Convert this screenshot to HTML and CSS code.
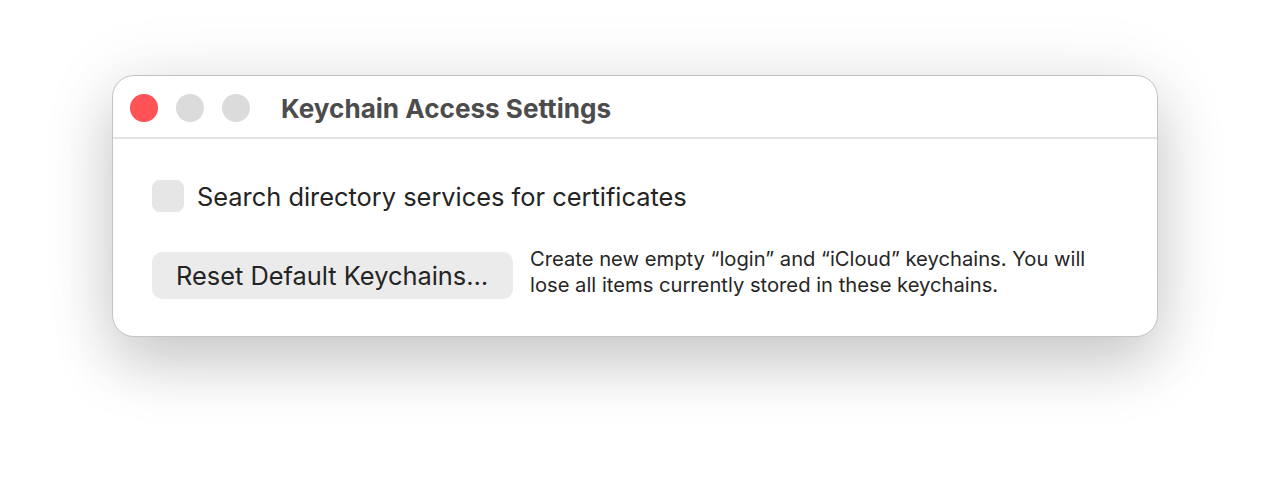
FILE: index.html
```html
<!DOCTYPE html>
<html lang="en">
<head>
<meta charset="utf-8">
<title>Keychain Access Settings</title>
<link rel="stylesheet" href="styles.css">
</head>
<body>
<div class="stage">
  <div class="window">
    <div class="titlebar">
      <div class="lights">
        <span class="light close"></span>
        <span class="light"></span>
        <span class="light"></span>
      </div>
      <div class="title">Keychain Access Settings</div>
    </div>
    <div class="content">
      <label class="check-row">
        <span class="checkbox"></span>
        <span class="check-label">Search directory services for certificates</span>
      </label>
      <div class="reset-row">
        <button class="btn">Reset Default Keychains…</button>
        <p class="desc">Create new empty “login” and “iCloud” keychains. You will<br>lose all items currently stored in these keychains.</p>
      </div>
    </div>
  </div>
</div>
</body>
</html>
```

FILE: styles.css
```css
html, body {
  margin: 0;
  padding: 0;
  background: #ffffff;
}
body {
  font-family: Inter, "Noto Sans", "Liberation Sans", sans-serif;
  width: 1270px;
  height: 486px;
  overflow: hidden;
}
.stage {
  display: flex;
  justify-content: center;
  padding-top: 75px;
}
.window {
  width: 1046px;
  height: 262px;
  box-sizing: border-box;
  background: #ffffff;
  border: 1px solid #c4c4c4;
  border-radius: 22px;
  box-shadow: 0 28px 60px rgba(0, 0, 0, 0.17), 0 6px 80px rgba(0, 0, 0, 0.09);
  display: flex;
  flex-direction: column;
}
.titlebar {
  height: 63px;
  box-sizing: border-box;
  border-bottom: 2px solid #e3e3e3;
  display: flex;
  align-items: center;
  padding-left: 17px;
}
.lights {
  display: flex;
  gap: 18px;
  margin-top: 2px;
}
.light {
  width: 28px;
  height: 28px;
  border-radius: 50%;
  background: #dbdbdb;
}
.light.close {
  background: #fe5257;
}
.title {
  margin-left: 31px;
  margin-top: 3px;
  font-weight: 700;
  font-size: 26.1px;
  color: #4c4c4c;
}
.content {
  padding: 41px 0 0 39px;
  display: flex;
  flex-direction: column;
}
.check-row {
  display: flex;
  align-items: center;
  gap: 13px;
}
.checkbox {
  width: 32px;
  height: 32px;
  border-radius: 8px;
  background: #e6e6e6;
}
.check-label {
  font-size: 25.4px;
  color: #242424;
}
.reset-row {
  display: flex;
  align-items: center;
  margin-top: 40px;
}
.btn {
  width: 361px;
  height: 47px;
  border: none;
  border-radius: 10px;
  background: #ebebeb;
  font-family: inherit;
  font-size: 25.4px;
  color: #242424;
  text-align: left;
  padding: 0 0 0 24px;
}
.desc {
  margin: -8px 0 0 17px;
  font-size: 20.2px;
  line-height: 26px;
  color: #262626;
}
```
